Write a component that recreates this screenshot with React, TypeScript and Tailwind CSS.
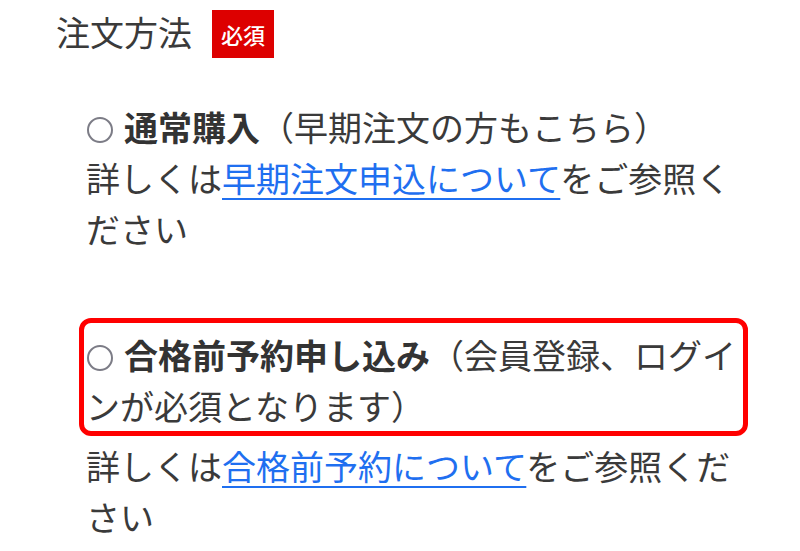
const font = {
  fontFamily: '"Noto Sans CJK JP", "Noto Sans", sans-serif',
};

function Radio() {
  // thin grey radio circle, sits in front of the label
  return (
    <span className="inline-block align-middle -mt-[4px] ml-[1px] mr-[11px] h-[26px] w-[26px] rounded-full border-[2px] border-[#7c7c86]" />
  );
}

export default function App() {
  return (
    <div
      className="w-[800px] h-[551px] overflow-hidden bg-white text-[#3a3a3a] text-[34px] leading-[51px]"
      style={font}
    >
      {/* heading */}
      <div className="flex items-center h-[48px] mt-[10px] pl-[56px]">
        <span className="leading-none -mt-[4px]">注文方法</span>
        <span className="ml-[20px] flex h-[48px] w-[62px] items-center justify-center bg-[#dd0000] text-[22px] font-medium leading-none text-white">
          必須
        </span>
      </div>

      <div className="ml-[86px] w-[660px]">
        {/* option 1 */}
        <div className="mt-[43px]">
          <p>
            <Radio />
            <b className="font-bold text-[#333]">通常購入</b>
            （早期注文の方もこちら）
          </p>
          <p>
            詳しくは
            <a href="#" className="text-[#1f6ff0] underline underline-offset-[6px] decoration-[2px]">
              早期注文申込について
            </a>
            をご参照ください
          </p>
        </div>

        {/* option 2 (highlighted) */}
        <div className="mt-[64px] -ml-[7px] w-[669px] rounded-[12px] border-[5px] border-[#ff0000] pl-[2px] pt-[6px]">
          <p>
            <Radio />
            <b className="font-bold text-[#333]">合格前予約申し込み</b>
            （会員登録、ログインが必須となります）
          </p>
        </div>
        <p className="mt-[4px]">
          詳しくは
          <a href="#" className="text-[#1f6ff0] underline underline-offset-[6px] decoration-[2px]">
            合格前予約について
          </a>
          をご参照ください
        </p>
      </div>
    </div>
  );
}
